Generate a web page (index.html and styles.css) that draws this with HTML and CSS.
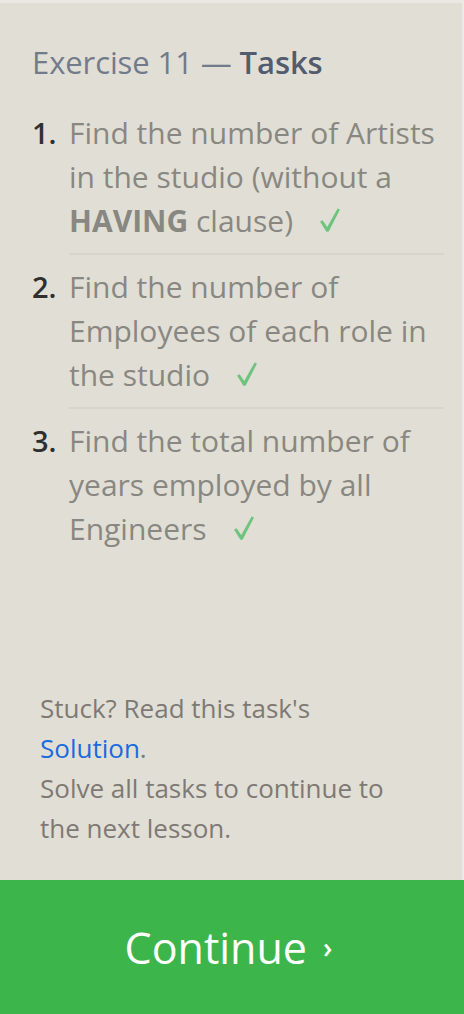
FILE: index.html
```html
<!DOCTYPE html>
<html>
<head>
<meta charset="utf-8">
<link rel="stylesheet" href="styles.css">
</head>
<body>
<div class="page">
  <div class="panel">
    <h2 class="title">Exercise 11 — <span class="title-strong">Tasks</span></h2>
    <ol class="tasks">
      <li class="task">
        <span class="num">1.</span>
        <div class="text">Find the number of Artists in the studio (without a <b>HAVING</b> clause)<svg class="check" viewBox="0 0 20 24"><path d="M0 13.5 L2.6 12.2 L7.2 19 L17.6 0.5 L20 1.6 L8.6 23.8 L6.4 23.8 Z"/></svg></div>
      </li>
      <li class="task">
        <span class="num">2.</span>
        <div class="text">Find the number of Employees of each role in the studio<svg class="check" viewBox="0 0 20 24"><path d="M0 13.5 L2.6 12.2 L7.2 19 L17.6 0.5 L20 1.6 L8.6 23.8 L6.4 23.8 Z"/></svg></div>
      </li>
      <li class="task">
        <span class="num">3.</span>
        <div class="text">Find the total number of years employed by all Engineers<svg class="check" viewBox="0 0 20 24"><path d="M0 13.5 L2.6 12.2 L7.2 19 L17.6 0.5 L20 1.6 L8.6 23.8 L6.4 23.8 Z"/></svg></div>
      </li>
    </ol>
    <div class="help">
      <p>Stuck? Read this task's <a class="link" href="#">Solution</a>.</p>
      <p>Solve all tasks to continue to the next lesson.</p>
    </div>
  </div>
  <a class="continue" href="#">Continue<span class="chev">›</span></a>
</div>
</body>
</html>
```
FILE: styles.css
```css
html, body {
  margin: 0;
  padding: 0;
}
body {
  font-family: "Open Sans", "DejaVu Sans", sans-serif;
  background: #e2e0d6;
}
.page {
  width: 464px;
  height: 1014px;
  display: flex;
  flex-direction: column;
}
.panel {
  flex: 1;
  background: #e1dfd5;
  border-top: 3px solid #e9e8e2;
  border-right: 2px solid #ebeae4;
  padding: 0 18px 0 32px;
  display: flex;
  flex-direction: column;
}
.title {
  margin: 39px 0 0;
  font-size: 31px;
  font-weight: 400;
  color: #727b8b;
  line-height: 40px;
  letter-spacing: -0.1px;
}
.title-strong {
  color: #535b6e;
  font-weight: 600;
}
.tasks {
  list-style: none;
  margin: 29px 0 0;
  padding: 0;
}
.task {
  display: flex;
}
.num {
  width: 37px;
  flex: none;
  font-size: 29px;
  line-height: 44px;
  color: #2f2f2f;
  font-weight: 600;
}
.text {
  flex: 1;
  font-size: 30px;
  line-height: 44px;
  color: #898782;
  padding-bottom: 10px;
  border-bottom: 2px solid #d7d5cb;
  margin-bottom: 10px;
}
.task:last-child .text {
  border-bottom: none;
}
.text b {
  font-weight: 700;
}
.check {
  width: 20px;
  height: 24px;
  margin-left: 27px;
  fill: #6ec47e;
  vertical-align: baseline;
}
.help {
  margin-top: auto;
  width: 372px;
  padding: 0 0 32px 8px;
  font-size: 26px;
  line-height: 40px;
  color: #7e7975;
}
.help p {
  margin: 0;
}
.link {
  color: #1a6ae0;
  text-decoration: none;
}
.continue {
  height: 134px;
  flex: none;
  background: #3cb54b;
  color: #ffffff;
  text-decoration: none;
  display: flex;
  align-items: center;
  justify-content: center;
  font-size: 43px;
  padding-right: 7px;
}
.chev {
  font-size: 28px;
  margin-left: 16px;
  font-weight: 600;
}
```
